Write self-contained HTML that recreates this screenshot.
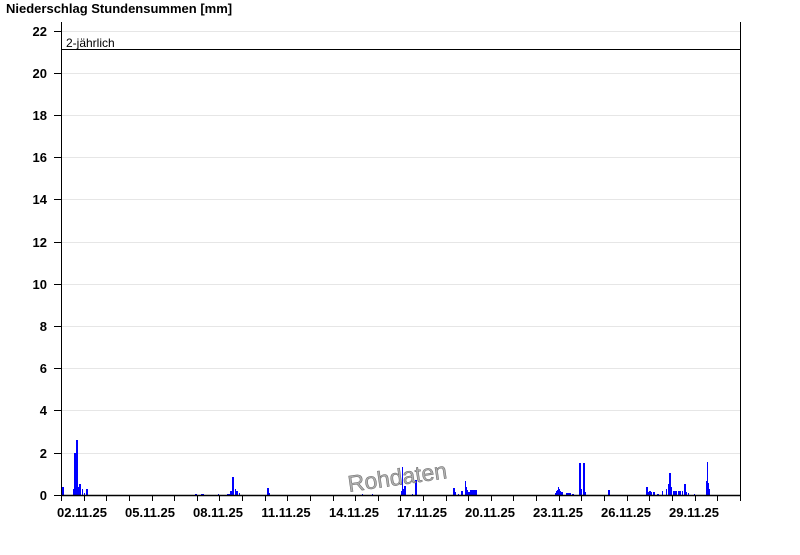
<!DOCTYPE html>
<html><head><meta charset="utf-8"><style>
body{margin:0;background:#fff;width:800px;height:550px;overflow:hidden}
svg text{font-family:"Liberation Sans",Arial,sans-serif}
</style></head><body>
<svg width="800" height="550" xmlns="http://www.w3.org/2000/svg">
<text x="6" y="13" font-size="13" font-weight="bold" fill="#000">Niederschlag Stundensummen [mm]</text>
<path stroke="#e6e6e6" d="M61 31.5H740M61 73.5H740M61 115.5H740M61 157.5H740M61 199.5H740M61 242.5H740M61 284.5H740M61 326.5H740M61 368.5H740M61 410.5H740M61 453.5H740"/>
<g font-size="13" font-weight="bold" text-anchor="end" fill="#000">
<text x="47" y="36">22</text><text x="47" y="78">20</text><text x="47" y="120">18</text><text x="47" y="162">16</text><text x="47" y="204">14</text><text x="47" y="247">12</text><text x="47" y="289">10</text><text x="47" y="331">8</text><text x="47" y="373">6</text><text x="47" y="415">4</text><text x="47" y="458">2</text><text x="47" y="500">0</text>
</g>
<path stroke="#000" d="M54 31.5H61M54 73.5H61M54 115.5H61M54 157.5H61M54 199.5H61M54 242.5H61M54 284.5H61M54 326.5H61M54 368.5H61M54 410.5H61M54 453.5H61M54 495.5H61"/>
<line x1="61" y1="49.5" x2="740" y2="49.5" stroke="#000"/>
<text x="66" y="47" font-size="12" fill="#000">2-jährlich</text>
<g fill="#0000ff">
<rect x="62" y="487" width="2" height="8"/><rect x="73" y="489" width="1" height="6"/><rect x="74" y="453" width="2" height="42"/><rect x="76" y="440" width="2" height="55"/><rect x="78" y="487" width="1" height="8"/><rect x="79" y="484" width="2" height="11"/><rect x="82" y="489" width="1" height="6"/><rect x="84" y="493" width="1" height="2"/><rect x="86" y="489" width="2" height="6"/>
<rect x="195" y="494" width="2" height="1"/><rect x="201" y="494" width="3" height="1"/><rect x="218" y="494" width="1" height="1"/><rect x="227" y="494" width="3" height="1"/><rect x="230" y="491" width="2" height="4"/><rect x="232" y="477" width="2" height="18"/><rect x="235" y="489" width="1" height="6"/><rect x="236" y="491" width="2" height="4"/><rect x="239" y="493" width="1" height="2"/>
<rect x="267" y="488" width="2" height="7"/><rect x="269" y="493" width="1" height="2"/><rect x="362" y="494" width="1" height="1"/><rect x="372" y="494" width="1" height="1"/>
<rect x="401" y="491" width="1" height="4"/><rect x="402" y="467" width="1" height="28"/><rect x="403" y="489" width="1" height="6"/><rect x="404" y="486" width="2" height="9"/><rect x="412" y="494" width="1" height="1"/><rect x="415" y="480" width="2" height="15"/>
<rect x="453" y="488" width="2" height="7"/><rect x="455" y="492" width="1" height="3"/><rect x="458" y="494" width="1" height="1"/><rect x="461" y="491" width="2" height="4"/><rect x="465" y="481" width="1" height="14"/><rect x="466" y="487" width="1" height="8"/><rect x="467" y="490" width="1" height="5"/><rect x="468" y="492" width="2" height="3"/><rect x="470" y="490" width="7" height="5"/>
<rect x="555" y="493" width="1" height="2"/><rect x="556" y="491" width="1" height="4"/><rect x="557" y="490" width="1" height="5"/><rect x="558" y="487" width="1" height="8"/><rect x="559" y="489" width="1" height="6"/><rect x="560" y="491" width="1" height="4"/><rect x="561" y="492" width="2" height="3"/><rect x="566" y="493" width="5" height="2"/><rect x="572" y="494" width="2" height="1"/><rect x="579" y="463" width="2" height="32"/><rect x="581" y="489" width="1" height="6"/><rect x="583" y="463" width="2" height="32"/><rect x="585" y="492" width="1" height="3"/>
<rect x="608" y="490" width="2" height="5"/><rect x="646" y="487" width="2" height="8"/><rect x="648" y="492" width="1" height="3"/><rect x="649" y="491" width="2" height="4"/><rect x="651" y="492" width="1" height="3"/><rect x="653" y="492" width="2" height="3"/><rect x="657" y="494" width="2" height="1"/><rect x="662" y="491" width="1" height="4"/><rect x="666" y="489" width="1" height="6"/><rect x="668" y="484" width="1" height="11"/><rect x="669" y="473" width="2" height="22"/><rect x="671" y="487" width="1" height="8"/><rect x="673" y="491" width="4" height="4"/><rect x="678" y="491" width="3" height="4"/><rect x="682" y="491" width="1" height="4"/><rect x="684" y="484" width="2" height="11"/><rect x="686" y="492" width="1" height="3"/><rect x="688" y="493" width="1" height="2"/><rect x="694" y="494" width="1" height="1"/><rect x="706" y="481" width="1" height="14"/><rect x="707" y="462" width="1" height="33"/><rect x="708" y="483" width="1" height="12"/><rect x="709" y="489" width="1" height="6"/>
</g>
<text x="347" y="485" font-size="23" fill="#b0b0b0" stroke="#666" stroke-width="0.5" transform="rotate(-8 398 474)">Rohdaten</text>
<line x1="61.5" y1="22" x2="61.5" y2="496" stroke="#000"/>
<line x1="740.5" y1="22" x2="740.5" y2="496" stroke="#000"/>
<line x1="61" y1="495.5" x2="741" y2="495.5" stroke="#000" stroke-width="1.5"/>
<path stroke="#000" d="M61.5 495v6M84.5 495v6M106.5 495v6M129.5 495v6M152.5 495v6M174.5 495v6M197.5 495v6M219.5 495v6M242.5 495v6M265.5 495v6M287.5 495v6M310.5 495v6M333.5 495v6M355.5 495v6M378.5 495v6M400.5 495v6M423.5 495v6M446.5 495v6M468.5 495v6M491.5 495v6M513.5 495v6M536.5 495v6M559.5 495v6M581.5 495v6M604.5 495v6M627.5 495v6M649.5 495v6M672.5 495v6M695.5 495v6M717.5 495v6M740.5 495v6"/>
<g font-size="13" font-weight="bold" text-anchor="middle" fill="#000">
<text x="82" y="517">02.11.25</text><text x="150" y="517">05.11.25</text><text x="218" y="517">08.11.25</text><text x="286" y="517">11.11.25</text><text x="354" y="517">14.11.25</text><text x="422" y="517">17.11.25</text><text x="490" y="517">20.11.25</text><text x="558" y="517">23.11.25</text><text x="626" y="517">26.11.25</text><text x="694" y="517">29.11.25</text>
</g>
</svg>
</body></html>
